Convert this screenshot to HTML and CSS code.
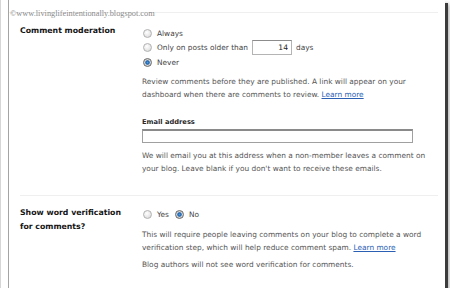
FILE: index.html
```html
<!DOCTYPE html>
<html lang="en">
<head>
    <meta charset="UTF-8">
    <meta name="viewport" content="width=device-width, initial-scale=1.0">
    <title>Comment settings</title>
    <link rel="stylesheet" href="styles.css">
</head>
<body>
    <div class="frame">
        <div class="panel">
            <div class="watermark">©www.livinglifeintentionally.blogspot.com</div>
            <div class="settings">
                <div class="setting">
                    <div class="setting-label">Comment moderation</div>
                    <div class="setting-body">
                        <label class="option"><input type="radio" name="moderation"> Always</label>
                        <label class="option"><input type="radio" name="moderation"> Only on posts older than <input type="text" class="days-input" value="14"> days</label>
                        <label class="option"><input type="radio" name="moderation" checked> Never</label>
                        <p class="hint">Review comments before they are published. A link will appear on your dashboard when there are comments to review. <a href="#">Learn more</a></p>
                        <div class="field">
                            <div class="field-label">Email address</div>
                            <input type="text" class="email-input">
                        </div>
                        <p class="hint">We will email you at this address when a non-member leaves a comment on your blog. Leave blank if you don't want to receive these emails.</p>
                    </div>
                </div>
                <div class="setting">
                    <div class="setting-label">Show word verification for comments?</div>
                    <div class="setting-body">
                        <div class="option-row">
                            <label class="option"><input type="radio" name="verification"> Yes</label>
                            <label class="option"><input type="radio" name="verification" checked> No</label>
                        </div>
                        <p class="hint">This will require people leaving comments on your blog to complete a word verification step, which will help reduce comment spam. <a href="#">Learn more</a></p>
                        <p class="hint hint-small">Blog authors will not see word verification for comments.</p>
                    </div>
                </div>
            </div>
        </div>
    </div>
</body>
</html>
```

FILE: styles.css
```css
body {
    margin: 0;
    background-color: #fff;
    font-family: "DejaVu Sans", Verdana, sans-serif;
}
/* Cadre de la capture avec son ombre */
.frame {
    width: 445px;
    height: 288px;
    box-sizing: border-box;
    background: #fff;
    border-left: 1px solid #d6d6d6;
    box-shadow: 3px 3px 0 #3c3c3c, 4px 4px 4px rgba(0, 0, 0, 0.35);
}
.panel {
    position: relative;
    height: 100%;
    margin-left: 7px;
    border-left: 1px solid #a4a4a4;
    padding-top: 12px;
    box-sizing: border-box;
}
.watermark {
    position: absolute;
    top: 9px;
    left: 1px;
    font-family: "Liberation Serif", "Times New Roman", serif;
    font-size: 8.3px;
    line-height: 9px;
    color: #8a8a8a;
    white-space: nowrap;
}
.settings {
    border-top: 1px solid #efefef;
    margin-right: 7px;
}
.setting {
    display: grid;
    grid-template-columns: 122px 286px;
    margin-left: 11px;
    padding: 11px 0 20px;
}
.setting + .setting {
    border-top: 1px solid #efefef;
    padding-top: 10px;
}
.setting-label {
    font-size: 7.8px;
    font-weight: bold;
    line-height: 14px;
    color: #151515;
    padding-right: 20px;
}
.setting-body {
    padding-top: 2px;
    font-size: 7.4px;
    color: #444;
}
.setting + .setting .setting-body {
    padding-top: 1px;
}
.option {
    display: flex;
    align-items: center;
    height: 14px;
}
.option-row {
    display: flex;
    gap: 6px;
}
.option input[type="radio"] {
    appearance: none;
    width: 9px;
    height: 9px;
    margin: 0 5px 0 1px;
    border: 1px solid #b2b2b2;
    border-radius: 50%;
    box-sizing: border-box;
    background: radial-gradient(circle at 40% 35%, #fff 0, #e6e6e6 60%, #cfcfcf 100%);
}
.option input[type="radio"]:checked {
    border-color: #6a6a6a;
    background: radial-gradient(circle, #4a9ae0 0, #1b5fa8 1.8px, #d8d8d8 2.6px, #bdbdbd 100%);
}
.option-row .option input[type="radio"]:checked {
    margin-left: 0;
}
.days-input {
    width: 40px;
    height: 15px;
    box-sizing: border-box;
    margin: 0 4px;
    padding: 0 3px;
    border: 1px solid #b4b4b4;
    border-top-color: #8c8c8c;
    font-family: inherit;
    font-size: 7.6px;
    color: #222;
    text-align: right;
}
.option:nth-child(2) {
    height: 15px;
}
.hint {
    margin: 6px 0 0;
    line-height: 13px;
    color: #555;
}
.hint-small {
    margin-top: 4px;
}
.hint a {
    display: inline-block;
    line-height: 12px;
    color: #2b5fb4;
    text-decoration: underline;
}
.field {
    margin-top: 14px;
}
.field-label {
    font-size: 6.7px;
    font-weight: bold;
    line-height: 14px;
    color: #2a2a2a;
}
.email-input {
    display: block;
    width: 271px;
    height: 14px;
    box-sizing: border-box;
    margin: 0;
    border: 1px solid #a0a0a0;
    border-top: 2px solid #8a8a8a;
    background: #fff;
}
```
